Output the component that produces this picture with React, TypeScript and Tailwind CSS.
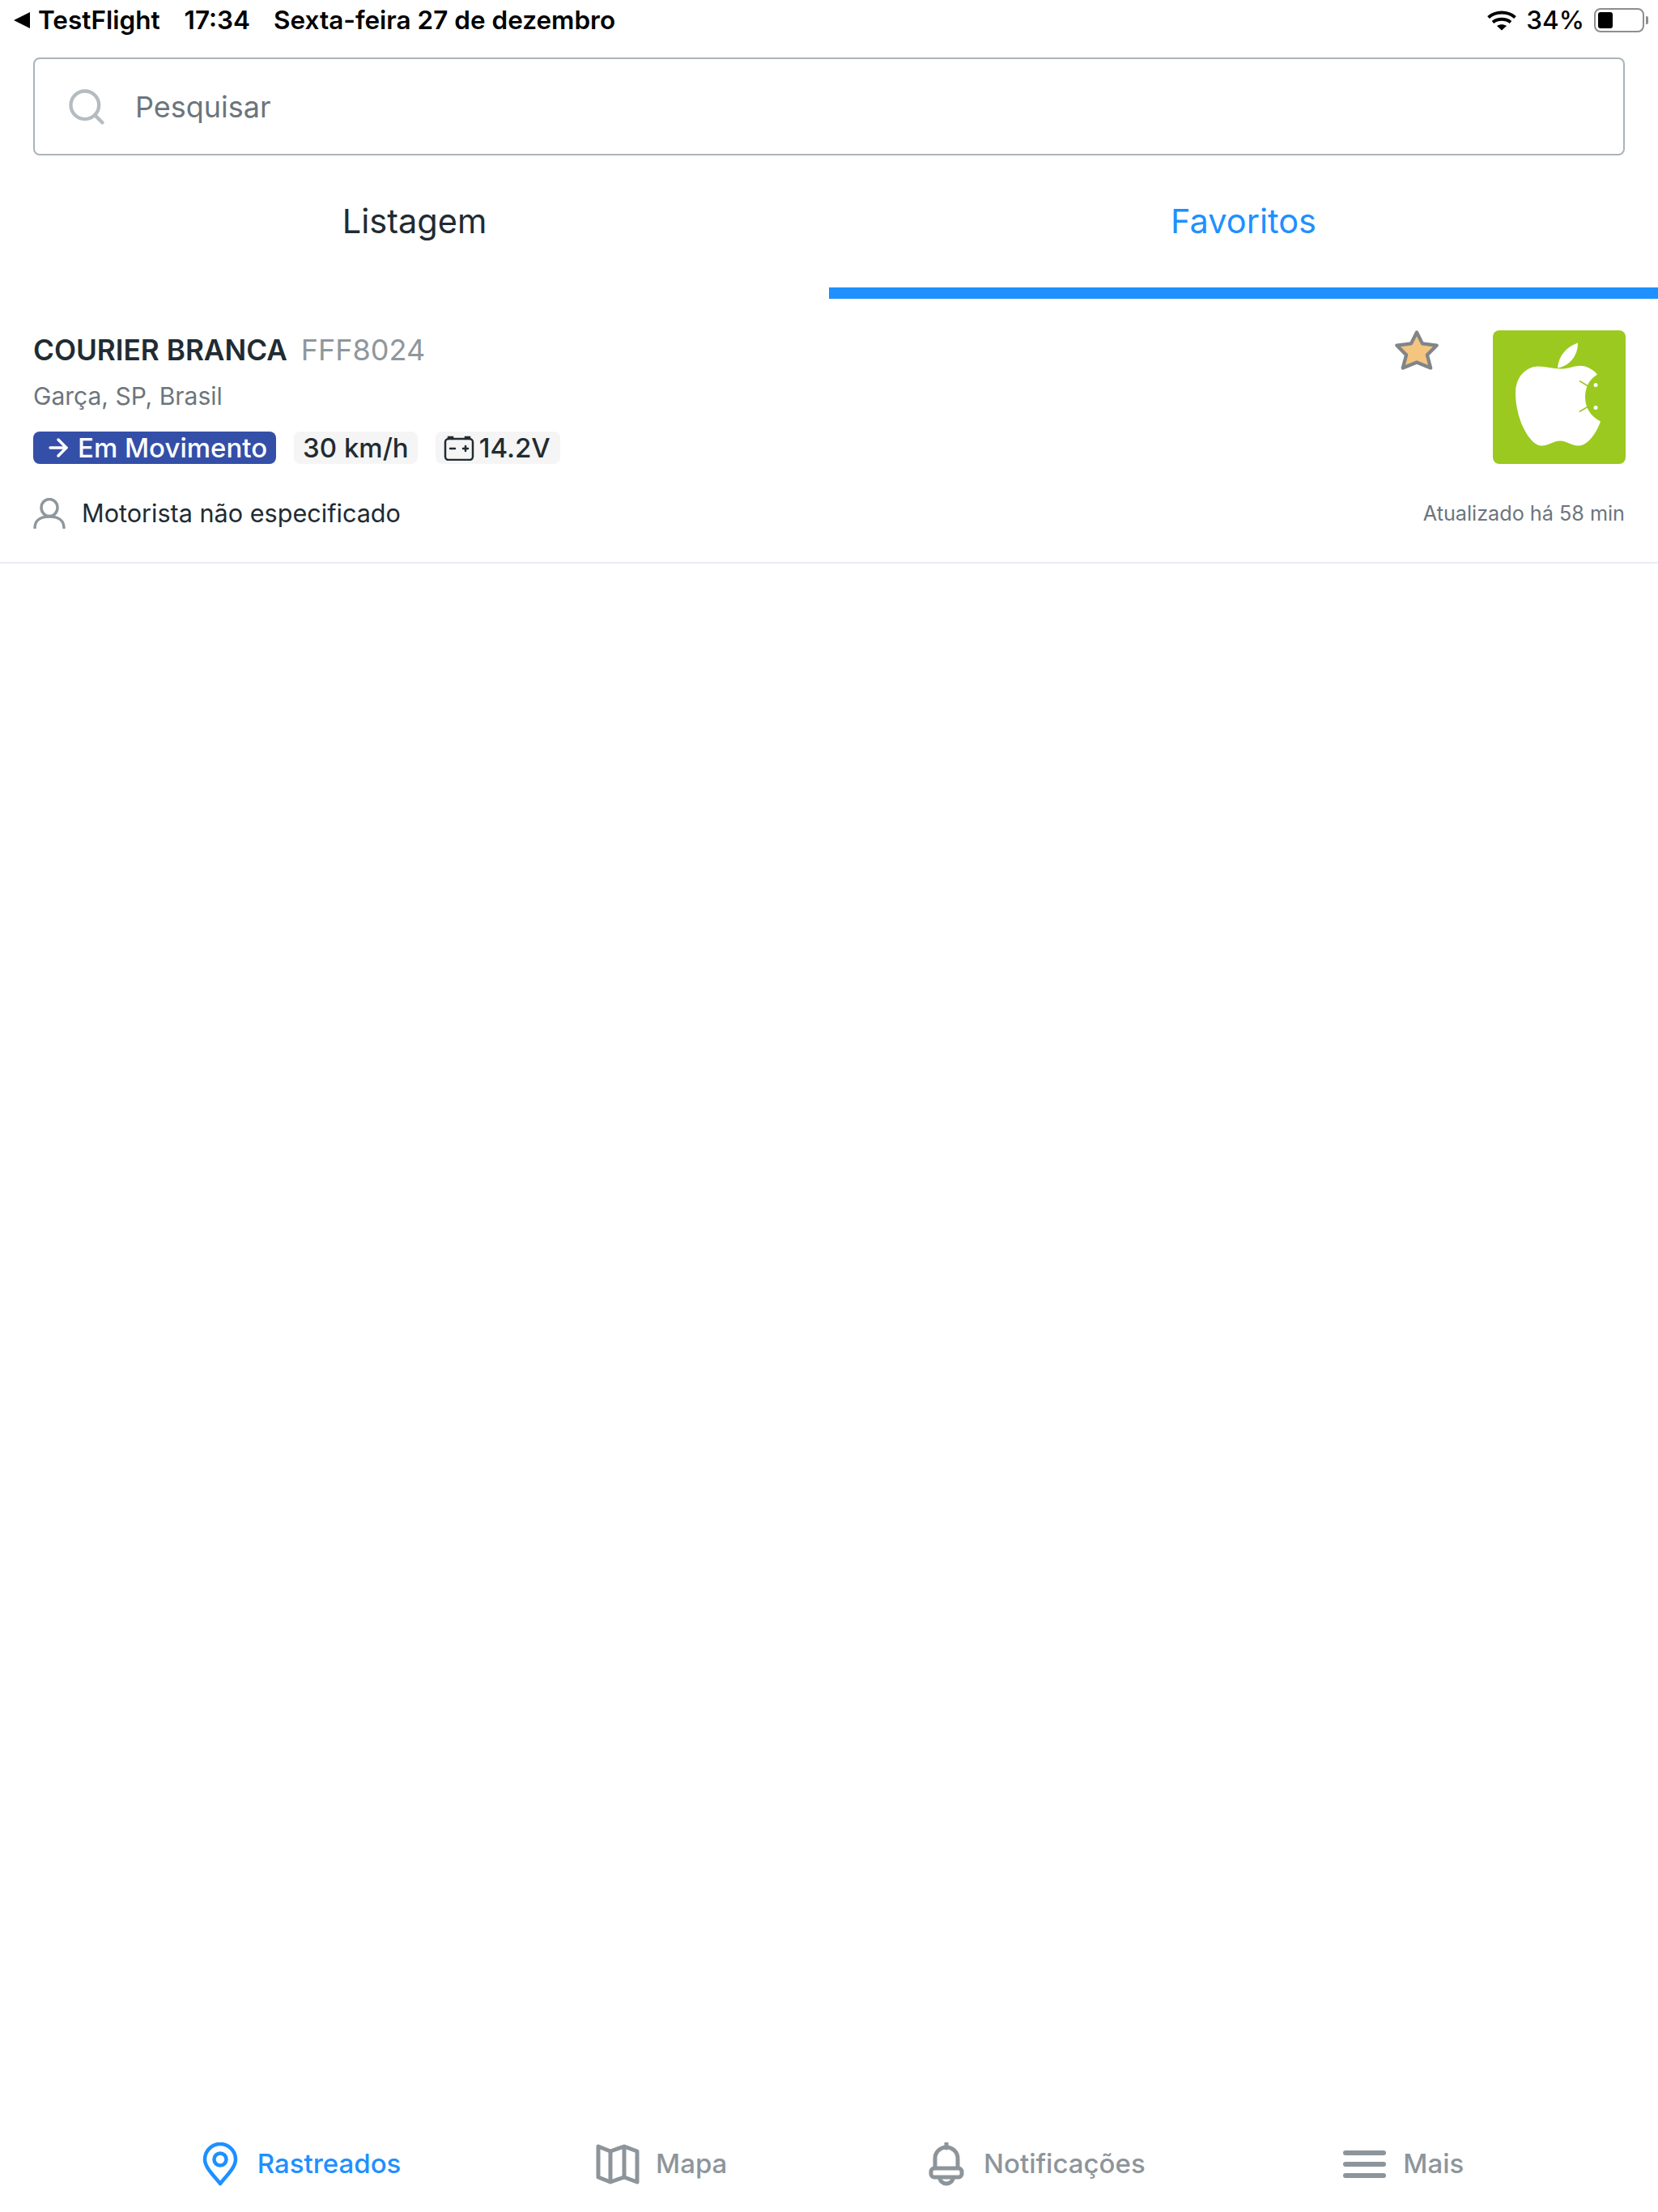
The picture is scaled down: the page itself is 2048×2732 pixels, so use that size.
import React from 'react';
import { ArrowRight, Search } from 'lucide-react';

function WifiGlyph() {
  return (
    <svg width="36" height="25" viewBox="0 0 36 25" fill="none" stroke="#000" strokeWidth="4">
      <path d="M1.5 8.5C10.5 0.5 25.5 0.5 34.5 8.5" />
      <path d="M7 14.5C13 9.5 23 9.5 29 14.5" />
      <path d="M18 24.5l-6-5.5c3.500-2.500 8.500-2.500 12 0z" fill="#000" stroke="none" />
    </svg>
  );
}

function BatteryGlyph() {
  return (
    <div className="flex items-center gap-[2px]">
      <div className="flex h-[30px] w-[62px] items-center rounded-[8px] border-2 border-[#8e8e8e] p-[3px]">
        <div className="h-[20px] w-[18px] rounded-[3px] bg-black" />
      </div>
      <div className="h-[10px] w-[3px] rounded-r-[2px] bg-[#8e8e8e]" />
    </div>
  );
}

function StatusBar() {
  return (
    <div className="flex h-[50px] items-center justify-between pl-[17px] pr-[12px] text-[31.5px] font-semibold leading-none text-black">
      <div className="flex items-center">
        <svg width="21" height="20" viewBox="0 0 21 20" className="mr-[9px]">
          <path d="M20 0v20L0 10z" fill="#000" />
        </svg>
        <span>TestFlight</span>
        <span className="ml-[30px]">17:34</span>
        <span className="ml-[29px]">Sexta-feira 27 de dezembro</span>
      </div>
      <div className="flex items-center gap-[12px]">
        <WifiGlyph />
        <span className="font-medium">34%</span>
        <BatteryGlyph />
      </div>
    </div>
  );
}

function SearchBox() {
  return (
    <div className="mx-[41px] mt-[21px] flex h-[121px] items-center rounded-[8px] border-2 border-[#aab4ba] pl-[38px]">
      <Search size={52} strokeWidth={2} className="text-[#b4bcc1]" />
      <span className="ml-[34px] text-[36px] text-[#6c757d]">Pesquisar</span>
    </div>
  );
}

function Tabs() {
  return (
    <div className="flex h-[177px]">
      <div className="flex flex-1 items-center justify-center pb-[14px] text-[41.5px] text-[#212b32]">Listagem</div>
      <div className="flex flex-1 items-center justify-center border-b-[14px] border-[#1e90ff] text-[41.5px] text-[#1e90ff]">
        Favoritos
      </div>
    </div>
  );
}

function DriverIcon() {
  return (
    <svg width="40" height="38" viewBox="0 0 40 38" fill="none" stroke="#8f979c" strokeWidth="3.500" strokeLinecap="round">
      <ellipse cx="20" cy="12" rx="10" ry="10.500" />
      <path d="M2 37c0-9 7-14 18-14s18 5 18 14" />
    </svg>
  );
}

function BatteryChip() {
  return (
    <svg width="38" height="32" viewBox="0 0 38 32" fill="none" stroke="#212b32" strokeWidth="2.500" strokeLinecap="round">
      <rect x="2" y="5" width="34" height="26" rx="4" />
      <path d="M6 5V3h5v2M27 5V3h5v2" />
      <path d="M8 17h6M24 17h6M27 14v6" />
    </svg>
  );
}

function ApplogoThumb() {
  return (
    <svg width="164" height="165" viewBox="0 0 164 164" className="rounded-[8px] bg-[#9bc920]">
      <path
        d="M80 46C81 32 90 20 105 15C105 30 96 43 80 46Z"
        fill="#fff"
      />
      <path
        d="M84 47C95 47 104 41 114 44C120 46 125 49 129 54C119 60 114 70 114 82C114 95 121 106 133 112C129 124 118 142 106 142C96 142 92 136 83 136C74 136 70 142 60 142C46 142 28 110 28 77C28 56 42 44 56 44C66 44 74 47 84 47Z"
        fill="#fff"
      />
      <g stroke="#9bc920" strokeWidth="1.500">
        <path d="M107 62l10 6M107 100l10-6" />
      </g>
      <circle cx="127" cy="67" r="2.500" fill="#fff" />
      <circle cx="127" cy="95" r="2.500" fill="#fff" />
    </svg>
  );
}

function StarIcon() {
  return (
    <svg width="58" height="56" viewBox="0 0 54 52" className="mr-[65px] mt-[-3px]">
      <path
        d="M27 5L33.500 18 50 20 39 31 43 46 27 39.500 11 46 15 31 4 20 20.500 18z"
        fill="#f4c57f"
        stroke="#80858a"
        strokeWidth="4"
        strokeLinejoin="round"
      />
    </svg>
  );
}

function TrackedRow() {
  return (
    <div className="border-b-2 border-[#eaebf4] pb-[37px] pl-[41px] pr-[40px] pt-[39px]">
      <div className="flex items-start justify-between">
        <div>
          <div className="flex items-baseline leading-[48px]">
            <span className="text-[35.2px] font-semibold text-[#212b32]">COURIER BRANCA</span>
            <span className="ml-[17px] text-[36px] text-[#8f979c]">FFF8024</span>
          </div>
          <div className="mt-[13px] text-[30px] leading-[40px] text-[#6c757d]">Garça, SP, Brasil</div>
          <div className="mt-[24px] flex items-center gap-[22px] text-[33px] font-medium leading-none">
            <div className="flex h-[40px] items-center rounded-[8px] bg-[#344fa8] pl-[14px] pr-[11px] text-white">
              <ArrowRight size={34} strokeWidth={2.500} className="mr-[7px]" />
              Em Movimento
            </div>
            <div className="flex h-[40px] items-center rounded-[8px] bg-[#f5f5f5] px-[11px] text-[#212b32]">30 km/h</div>
            <div className="flex h-[40px] items-center gap-[6px] rounded-[8px] bg-[#f5f5f5] pl-[10px] pr-[12px] text-[#212b32]">
              <BatteryChip />
              14.2V
            </div>
          </div>
        </div>
        <div className="flex items-start">
          <StarIcon />
          <ApplogoThumb />
        </div>
      </div>
      <div className="mt-[38px] flex items-center justify-between">
        <div className="flex items-center">
          <DriverIcon />
          <span className="ml-[20px] text-[30.6px] text-[#212b32]">Motorista não especificado</span>
        </div>
        <span className="mr-[1px] mt-[2px] text-[25.2px] text-[#6c757d]">Atualizado há 58 min</span>
      </div>
    </div>
  );
}

function PinIcon() {
  return (
    <svg width="44" height="54" viewBox="0 0 44 54" fill="none" stroke="#1e90ff" strokeWidth="4.500">
      <path d="M22 51C14 41 3 31 3 21a19 19 0 0 1 38 0c0 10-11 20-19 30z" strokeLinejoin="round" />
      <circle cx="22" cy="21" r="7.500" />
    </svg>
  );
}

function MapGlyph() {
  return (
    <svg width="54" height="50" viewBox="0 0 54 50" fill="none" stroke="#8d959b" strokeWidth="5" strokeLinejoin="round">
      <path d="M3 3L18 9 35 3 51 9V47L35 41 18 47 3 41Z" />
      <path d="M18 9V47M35 3V41" />
    </svg>
  );
}

function BellIcon() {
  return (
    <svg width="44" height="54" viewBox="0 0 44 54" fill="none" stroke="#8d959b" strokeWidth="5" strokeLinejoin="round">
      <path d="M22 1v6" strokeLinecap="round" />
      <path d="M8 32V20a14 14 0 0 1 28 0v12" />
      <rect x="3" y="32" width="38" height="11" rx="4" />
      <path d="M14 44a8 7 0 0 0 16 0" />
    </svg>
  );
}

function MenuIcon() {
  return (
    <div className="flex w-[53px] flex-col gap-[8px]">
      <div className="h-[6px] rounded-full bg-[#8d959b]" />
      <div className="h-[6px] rounded-full bg-[#8d959b]" />
      <div className="h-[6px] rounded-full bg-[#8d959b]" />
    </div>
  );
}

function BottomNav() {
  const items = [
    { label: 'Rastreados', icon: <PinIcon />, active: true, extra: 'gap-[24px]' },
    { label: 'Mapa', icon: <MapGlyph />, active: false, extra: 'gap-[20px] -ml-[4px] mr-[4px]' },
    { label: 'Notificações', icon: <BellIcon />, active: false, extra: 'gap-[24px]' },
    { label: 'Mais', icon: <MenuIcon />, active: false, extra: 'gap-[21px]' },
  ];
  return (
    <div className="ml-[5px] flex h-[120px] w-[2048px] items-start justify-evenly pt-[31px]">
      {items.map((item) => (
        <div key={item.label} className={`flex h-[60px] items-center ${item.extra}`}>
          {item.icon}
          <span className={`text-[33px] font-medium ${item.active ? 'text-[#1e90ff]' : 'text-[#8d959b]'}`}>
            {item.label}
          </span>
        </div>
      ))}
    </div>
  );
}

export default function App() {
  return (
    <div className="flex h-[2732px] w-[2048px] flex-col overflow-hidden bg-white [font-family:Inter,sans-serif]">
      <StatusBar />
      <SearchBox />
      <Tabs />
      <TrackedRow />
      <div className="flex-1" />
      <BottomNav />
    </div>
  );
}
